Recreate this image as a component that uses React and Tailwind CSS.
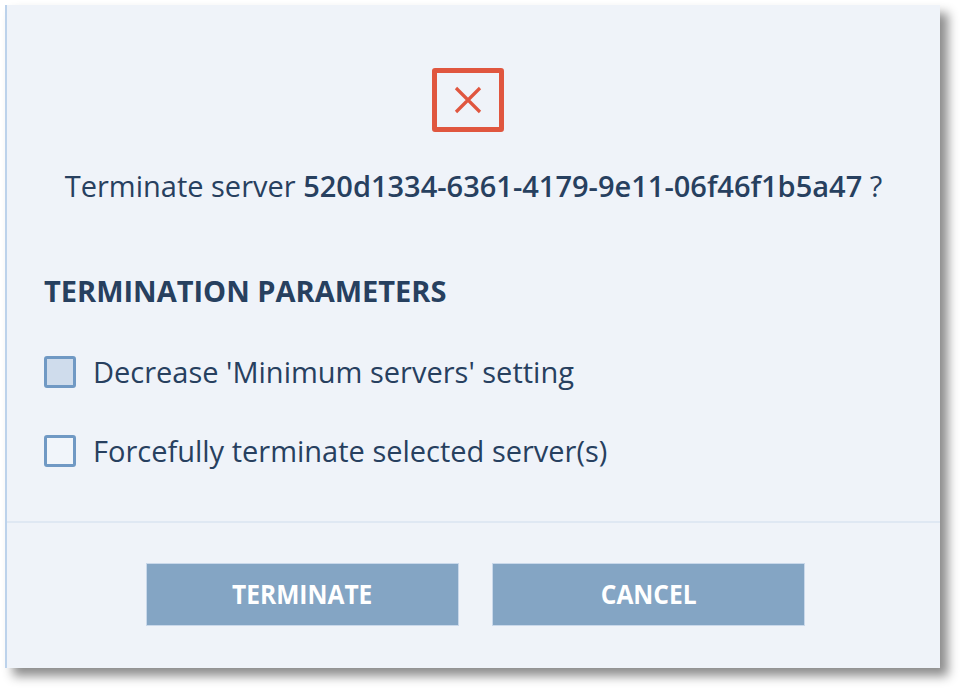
import { useState } from "react";

function Checkbox({ checked, label, onToggle }) {
    return (
        <label className="flex items-center gap-[17px] cursor-pointer">
            <span
                onClick={onToggle}
                className={
                    "w-[32px] h-[32px] rounded-[3px] border-[3px] border-[#7099c4] " +
                    (checked ? "bg-[#cfdcec]" : "bg-[#f1f5fa]")
                }
            />
            <span className="text-[29px] leading-[32px] text-[#27405f]">{label}</span>
        </label>
    );
}

export default function App() {
    const [minServers, setMinServers] = useState(true);
    const [force, setForce] = useState(false);

    return (
        <div className="w-[969px] h-[697px] bg-white pt-[5px] pl-[5px]" style={{ fontFamily: '"Open Sans", "Noto Sans", sans-serif' }}>
            <div className="w-[935px] h-[663px] bg-[#eff3f9] border-l-2 border-[#bcd2eb] shadow-[8px_8px_10px_rgba(0,0,0,0.45)] flex flex-col">
                <div className="flex justify-center pt-[63px] pr-[11px]">
                    <div className="w-[72px] h-[64px] border-[5px] border-[#e0563f] rounded-[3px] flex items-center justify-center">
                        <svg width="28" height="28" viewBox="0 0 28 28">
                            <path d="M2 2 L26 26 M26 2 L2 26" stroke="#e0563f" strokeWidth="3.2" />
                        </svg>
                    </div>
                </div>

                <p className="text-center text-[29px] text-[#27405f] mt-[36px] leading-[36px]">
                    Terminate server <span className="font-semibold">520d1334-6361-4179-9e11-06f46f1b5a47</span> ?
                </p>

                <div className="pl-[37px] mt-[70px]">
                    <h2 className="text-[29px] font-bold text-[#27405f] leading-[34px]">TERMINATION PARAMETERS</h2>
                    <div className="flex flex-col gap-[47px] mt-[48px]">
                        <Checkbox checked={minServers} onToggle={() => setMinServers(!minServers)} label="Decrease 'Minimum servers' setting" />
                        <Checkbox checked={force} onToggle={() => setForce(!force)} label="Forcefully terminate selected server(s)" />
                    </div>
                </div>

                <div className="mt-auto border-t-2 border-[#dfe8f3] h-[147px] flex justify-center items-start pt-[40px] gap-[33px] pl-[4px]">
                    <button className="w-[313px] h-[63px] bg-[#84a5c4] border border-[#c9d8ea] text-white font-bold text-[27px]">
                        <span className="inline-block scale-x-[0.91]">TERMINATE</span>
                    </button>
                    <button className="w-[313px] h-[63px] bg-[#84a5c4] border border-[#c9d8ea] text-white font-bold text-[27px]">
                        <span className="inline-block scale-x-[0.91]">CANCEL</span>
                    </button>
                </div>
            </div>
        </div>
    );
}
